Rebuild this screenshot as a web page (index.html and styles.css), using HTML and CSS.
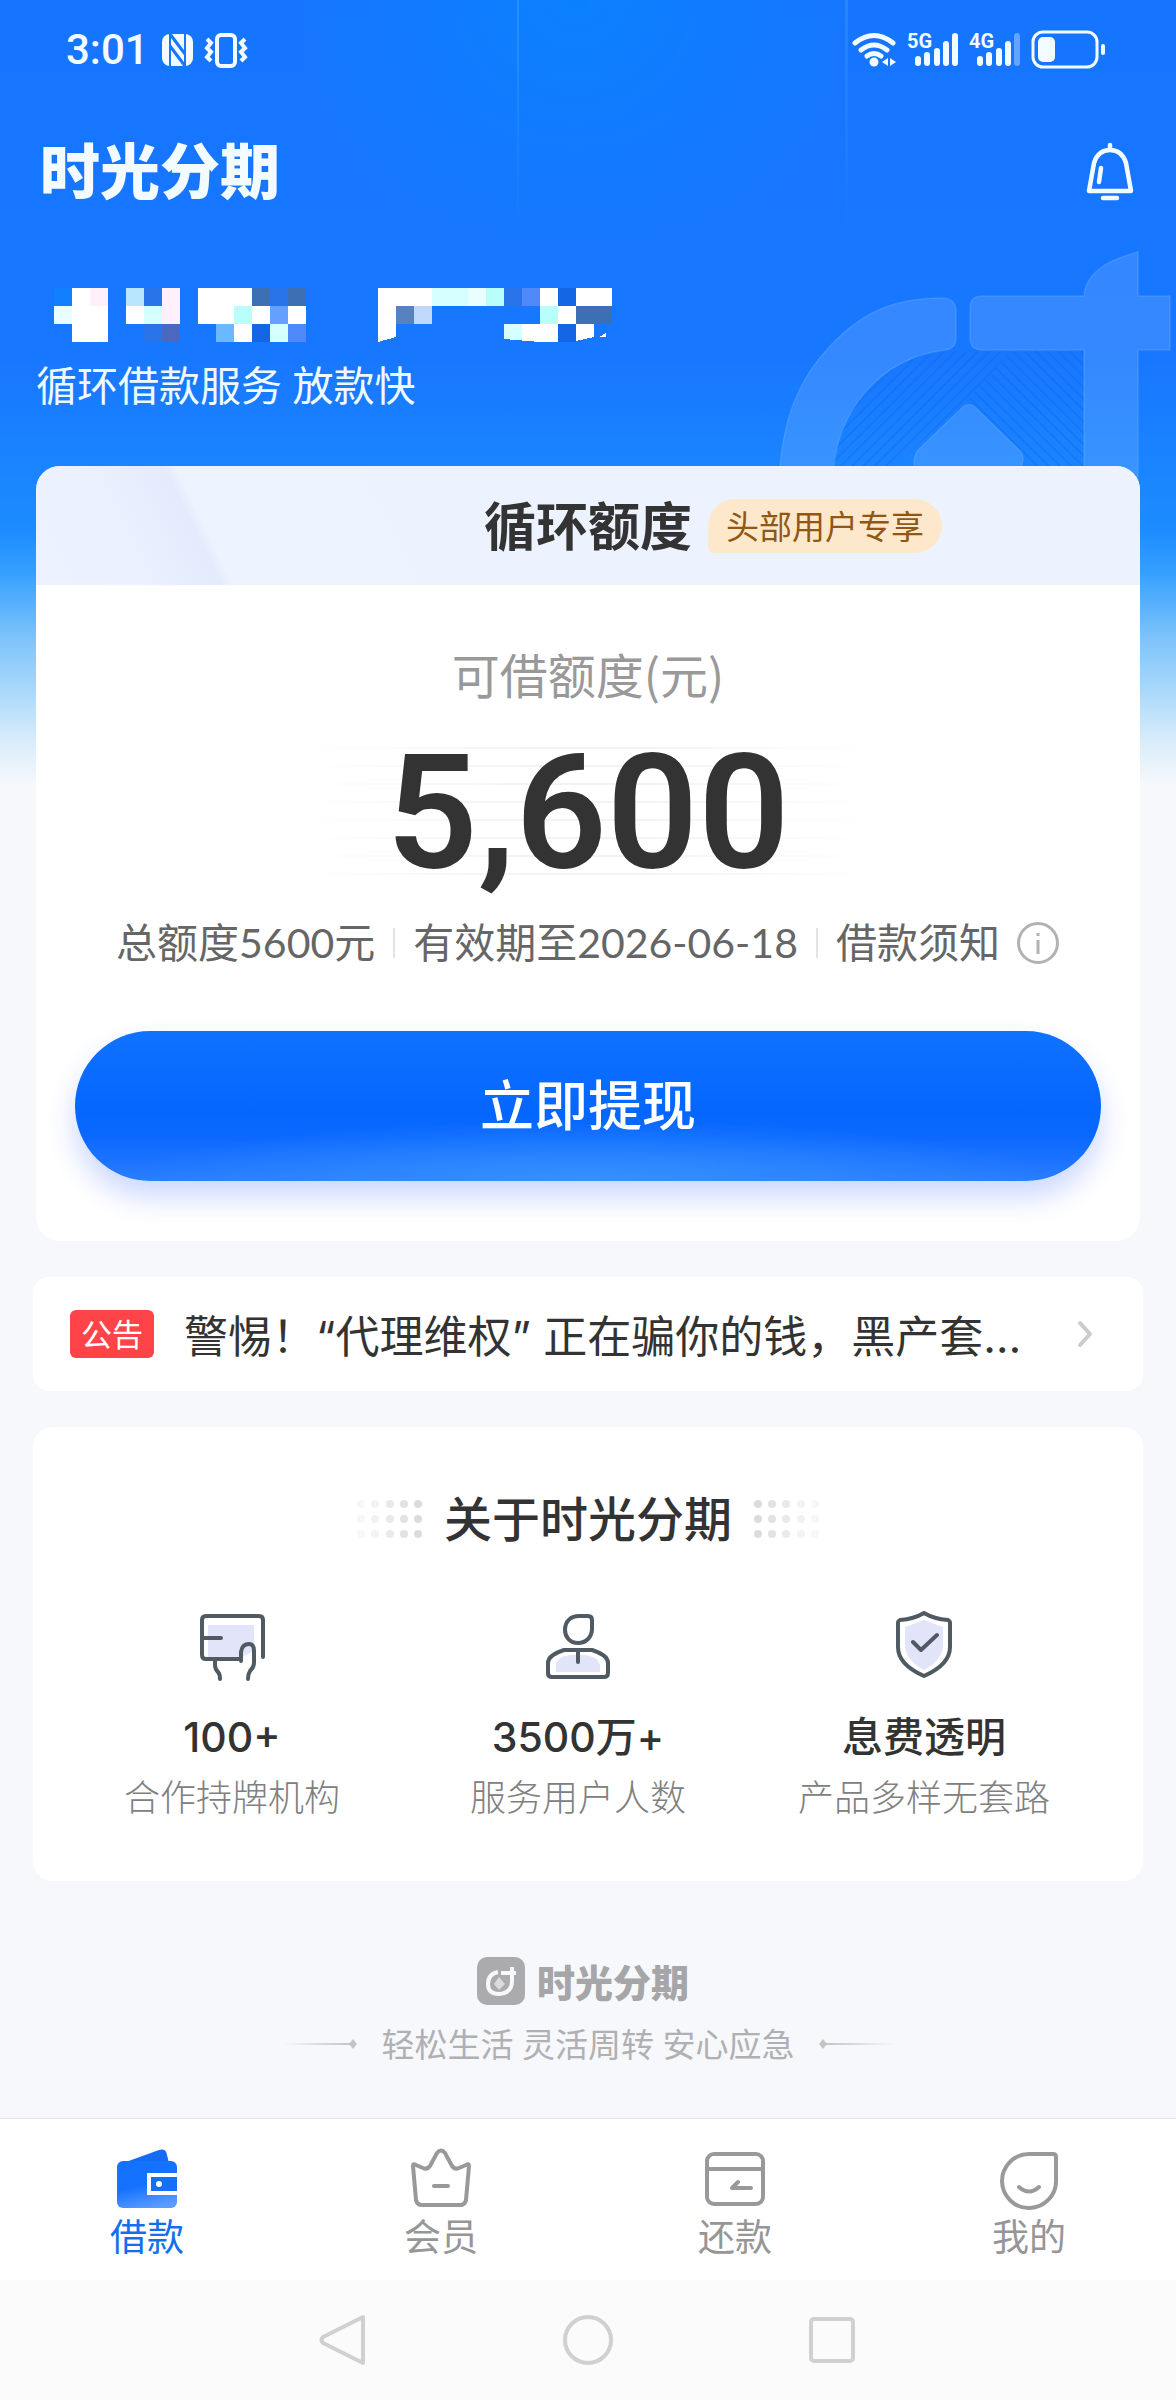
FILE: index.html
```html
<!DOCTYPE html>
<html lang="zh-CN">
<head>
<meta charset="utf-8">
<meta name="viewport" content="width=device-width, initial-scale=1">
<title>时光分期</title>
<link rel="stylesheet" href="styles.css">
</head>
<body>
<div class="page">
  <svg class="watermark" viewBox="776 240 400 300" aria-hidden="true">
    <defs>
      <pattern id="hatch-a" width="8" height="8" patternUnits="userSpaceOnUse" patternTransform="rotate(-45)"><path d="M0 4H8" stroke="#0b66e6" stroke-opacity=".3" stroke-width="2"/></pattern>
      <pattern id="hatch-b" width="8" height="8" patternUnits="userSpaceOnUse" patternTransform="rotate(45)"><path d="M0 4H8" stroke="#0b66e6" stroke-opacity=".3" stroke-width="2"/></pattern>
    </defs>
    <path d="M833 470C836 410 880 358 945 351H1010L968 400L890 470Z" fill="url(#hatch-a)"/>
    <path d="M1010 351H1084V470H1030L968 400Z" fill="url(#hatch-b)"/>
    <g fill="#fff" fill-opacity=".13" stroke="#7fc0ff" stroke-opacity=".25" stroke-width="1.5">
      <path d="M779 480C782 420 798 380 830 346C866 308 900 298 942 298Q956 298 956 312V337Q956 349 945 350C880 358 834 412 833 480Z"/>
      <path d="M1084 296C1086 272 1108 260 1138 252V296H1170V350H1138V530H1084V350H982Q970 350 970 338V308Q970 296 982 296Z"/>
      <path d="M962 408Q969 401 976 408L1020 451Q1026 458 1020 470H915Q912 458 918 450Z"/>
    </g>
  </svg>

  <header class="hero">
    <div class="status">
      <span class="status-time">3:01</span>
      <svg class="status-left" width="88" height="36" viewBox="0 0 88 36" fill="none" aria-hidden="true">
        <rect x="1" y="2" width="31" height="32" rx="8" fill="#f2fbff"/>
        <path d="M9 1V35M24 1V35" stroke="#1877ff" stroke-width="2"/>
        <path d="M9 2L24 22M9 14L24 34" stroke="#1877ff" stroke-width="3"/>
        <rect x="56" y="3" width="18" height="31" rx="4" stroke="#f2fbff" stroke-width="4"/>
        <path d="M46 7l4 4-4 5 4 4-4 5 4 4M84 7l-4 4 4 5-4 4 4 5-4 4" stroke="#f2fbff" stroke-width="4"/>
      </svg>
      <svg class="status-right" width="256" height="40" viewBox="850 30 256 40" fill="none" aria-hidden="true">
        <g stroke="#f2fbff" stroke-width="5" stroke-linecap="round">
          <path d="M855 43Q874 28 893 43M861 50Q874 40 887 50M867 56Q874 51 881 56"/>
        </g>
        <circle cx="874" cy="62" r="4.500" fill="#f2fbff"/>
        <path d="M888 58v8l-6-4zM890 58l6 4-6 4z" fill="#f2fbff"/>
        <g fill="#f2fbff">
          <text class="net" x="907" y="48">5G</text>
          <text class="net" x="969" y="48">4G</text>
          <rect x="915" y="56" width="6" height="10" rx="3"/><rect x="924" y="52" width="6" height="14" rx="3"/><rect x="934" y="48" width="6" height="18" rx="3"/><rect x="943" y="41" width="6" height="25" rx="3"/><rect x="952" y="33" width="6" height="33" rx="3"/>
          <rect x="977" y="56" width="6" height="10" rx="3"/><rect x="986" y="52" width="6" height="14" rx="3"/><rect x="996" y="48" width="6" height="18" rx="3"/><rect x="1005" y="41" width="6" height="25" rx="3"/><rect x="1014" y="33" width="6" height="33" rx="3" opacity=".35"/>
          <rect x="1038" y="37" width="17" height="25" rx="5"/><rect x="1101" y="44" width="4" height="11" rx="2"/>
        </g>
        <rect x="1033" y="32" width="64" height="35" rx="10" stroke="#f2fbff" stroke-width="3"/>
      </svg>
    </div>
    <div class="topbar">
      <h1 class="brand">时光分期</h1>
      <button class="bell" type="button" aria-label="消息">
        <svg width="52" height="60" viewBox="0 0 52 60" fill="none" stroke="#f2fbff" stroke-width="4.500" stroke-linecap="round" stroke-linejoin="round">
          <path d="M26 3V8M5 49L10 21Q14 8 26 8Q38 8 42 21L47 49ZM17 26L15 40M19 56H33"/>
        </svg>
      </button>
    </div>
    <svg class="masked" width="560" height="54" viewBox="0 0 560 54" shape-rendering="crispEdges" role="img" aria-label="已隐藏">
      <g fill="#fff">
        <path d="M18 0H54V54H18V18ZM0 18H18V36H0ZM72 18H126V36H72ZM144 0H198V36H144ZM198 18H216V36H198ZM234 18H252V36H234ZM180 36H198V54H180ZM324 0H378V18H342V49L324 54ZM486 0H504V18H486ZM504 18H522V36H504ZM522 0H558V18H522ZM450 36H486V54L450 51ZM522 36H540V49L522 53ZM545 49L552 45V49Z"/>
      </g>
      <path fill="#1080ff" d="M0 0H18V18H0Z"/>
      <path fill="#fff0fb" d="M36 0H54V18H36ZM108 0H126V36H108Z"/>
      <path fill="#b8e6ff" d="M72 0H90V18H72Z"/>
      <path fill="#2a74ea" d="M90 0H108V18H90ZM216 0H234V18H216ZM450 0H468V18H450ZM90 36H108V54H90Z"/>
      <path fill="#3d6fb5" d="M198 0H216V18H198ZM234 0H252V18H234ZM522 18H558V36H522Z"/>
      <path fill="#d6ffff" d="M378 0H414V18H378ZM90 18H108V36H90ZM216 36H234V54H216ZM450 36H468V52L450 51Z"/>
      <path fill="#e9ffff" d="M0 18H18V36H0ZM414 0H432V18H414Z"/>
      <path fill="#b8fffc" d="M432 0H450V18H432ZM180 18H198V36H180ZM486 18H504V36H486Z"/>
      <path fill="#fff" d="M486 36H504V54L486 54Z"/>
      <path fill="#4f88f8" d="M468 0H486V18H468ZM234 36H252V54H234Z"/>
      <path fill="#66a0ff" d="M216 18H234V36H216Z"/>
      <path fill="#6ab8ff" d="M162 36H180V54H162Z"/>
      <path fill="#5682c0" d="M342 18H360V36H342Z"/>
      <path fill="#c0d8fc" d="M360 18H378V36H360Z"/>
      <path fill="#4a68c0" d="M108 36H126V54H108Z"/>
      <path fill="#1466e4" d="M504 0H522V18H504ZM504 36H522V54H504ZM198 36H216V54H198Z"/>
    </svg>
    <p class="slogan">循环借款服务 放款快</p>
  </header>

  <main>
    <section class="quota">
      <div class="quota-head">
        <h2 class="quota-title">循环额度</h2>
        <span class="quota-badge">头部用户专享</span>
      </div>
      <div class="quota-body">
        <p class="quota-label">可借额度(元)</p>
        <p class="quota-amount">5,600</p>
        <div class="quota-info">
          <span>总额度5600元</span>
          <i class="sep"></i>
          <span>有效期至2026-06-18</span>
          <i class="sep"></i>
          <a class="terms" href="#terms">借款须知
            <svg width="44" height="44" viewBox="0 0 44 44" fill="none" stroke="#b2b2b2" stroke-width="3" aria-hidden="true"><circle cx="22" cy="22" r="19.500"/><path d="M22 19V33M22 12V15"/></svg>
          </a>
        </div>
        <button class="withdraw" type="button">立即提现</button>
      </div>
    </section>

    <a class="notice" href="#notice">
      <span class="notice-tag">公告</span>
      <span class="notice-text">警惕！“代理维权” 正在骗你的钱，黑产套…</span>
      <svg width="16" height="28" viewBox="0 0 16 28" fill="none" stroke="#ccc" stroke-width="4" stroke-linecap="round" stroke-linejoin="round" aria-hidden="true"><path d="M3 3L13 14L3 25"/></svg>
    </a>

    <section class="about">
      <div class="about-head">
        <svg class="dots" width="68" height="40" viewBox="0 0 68 40" fill="#dcdcdc" aria-hidden="true">
          <g id="dot-cols"><g opacity=".2"><circle cx="5" cy="5" r="4"/><circle cx="5" cy="20" r="4"/><circle cx="5" cy="35" r="4"/></g><g opacity=".35"><circle cx="19" cy="5" r="4"/><circle cx="19" cy="20" r="4"/><circle cx="19" cy="35" r="4"/></g><g opacity=".6"><circle cx="34" cy="5" r="4"/><circle cx="34" cy="20" r="4"/><circle cx="34" cy="35" r="4"/></g><g opacity=".8"><circle cx="48" cy="5" r="4"/><circle cx="48" cy="20" r="4"/><circle cx="48" cy="35" r="4"/></g><g><circle cx="62" cy="5" r="4"/><circle cx="62" cy="20" r="4"/><circle cx="62" cy="35" r="4"/></g></g>
        </svg>
        <h2 class="about-title">关于时光分期</h2>
        <svg class="dots" width="68" height="40" viewBox="0 0 68 40" fill="#dcdcdc" aria-hidden="true"><use href="#dot-cols" transform="matrix(-1 0 0 1 68 0)"/></svg>
      </div>
      <ul class="facts">
        <li class="fact">
          <svg width="72" height="72" viewBox="0 0 72 72" fill="none" stroke="#505a62" stroke-width="4" stroke-linecap="round" stroke-linejoin="round" aria-hidden="true">
            <path d="M12 14H58V40L46 46H12Z" fill="#e2e5fa" stroke="none"/>
            <path d="M45 48H10Q6 48 6 44V9Q6 5 10 5H63Q67 5 67 9V46M7 27H25M45 50V41Q46 33 53 33Q58 33 58 40V52Q58 56 54 60Q52 63 52 68M19 48V54Q19 58 22 61Q24 63 24 68"/>
          </svg>
          <strong class="fact-value">100+</strong>
          <span class="fact-note">合作持牌机构</span>
        </li>
        <li class="fact">
          <svg width="72" height="72" viewBox="0 0 72 72" fill="none" stroke="#505a62" stroke-width="4" stroke-linecap="round" stroke-linejoin="round" aria-hidden="true">
            <path d="M14 61V52Q16 46 28 44H44Q56 46 58 54V61Z" fill="#e2e5fa" stroke="none"/>
            <path d="M37 5H46Q50 5 50 9V18C50 26 44 32 36 32C28 32 23 26 23 19C23 10 29 5 37 5ZM22 39H50Q66 44 66 52V62Q66 66 62 66H10Q6 66 6 62V52Q6 44 22 39ZM36 40V51"/>
          </svg>
          <strong class="fact-value">3500万+</strong>
          <span class="fact-note">服务用户人数</span>
        </li>
        <li class="fact">
          <svg width="72" height="72" viewBox="0 0 72 72" fill="none" stroke="#505a62" stroke-width="4" stroke-linecap="round" stroke-linejoin="round" aria-hidden="true">
            <path d="M36 9L55 16V36Q53 50 36 59Q19 50 17 36V16Z" fill="#e2e5fa" stroke="none"/>
            <path d="M36 2Q46 8 60 9Q62 10 62 12V36C62 49 52 58 36 65C20 58 10 49 10 36V12Q10 10 12 9Q26 8 36 2ZM25 31L33 39L49 24"/>
          </svg>
          <strong class="fact-value">息费透明</strong>
          <span class="fact-note">产品多样无套路</span>
        </li>
      </ul>
    </section>
  </main>

  <footer class="footer">
    <div class="footer-brand">
      <svg width="48" height="48" viewBox="0 0 48 48" fill="none" aria-hidden="true">
        <rect width="48" height="48" rx="10" fill="#ababad"/>
        <path d="M21 15Q11 17 11 27Q11 37 22 37Q35 36 35 24V10M24 16H39" stroke="#f6f8fb" stroke-width="4"/>
        <path d="M22 20L28 27L22 33L17 27Z" fill="#dcdcde"/>
      </svg>
      <span>时光分期</span>
    </div>
    <div class="footer-line">
      <svg width="76" height="10" viewBox="0 0 76 10" aria-hidden="true"><defs><linearGradient id="fade"><stop stop-color="#c4c4c4" stop-opacity="0"/><stop offset="1" stop-color="#c4c4c4"/></linearGradient></defs><rect y="4" width="68" height="2" fill="url(#fade)"/><path d="M71 0L75 5L71 10L67 5Z" fill="#c4c4c4"/></svg>
      <span>轻松生活 灵活周转 安心应急</span>
      <svg width="76" height="10" viewBox="0 0 76 10" aria-hidden="true"><g transform="matrix(-1 0 0 1 76 0)"><rect y="4" width="68" height="2" fill="url(#fade)"/><path d="M71 0L75 5L71 10L67 5Z" fill="#c4c4c4"/></g></svg>
    </div>
  </footer>

  <nav class="tabs">
    <a class="tab tab-active" href="#loan">
      <svg width="64" height="64" viewBox="0 0 64 64" aria-hidden="true">
        <defs><linearGradient id="wallet" x1=".3" y1="0" x2=".6" y2="1"><stop offset=".5" stop-color="#1472ff"/><stop offset="1" stop-color="#5b9cff"/></linearGradient></defs>
        <path d="M8 16L44 3Q51 1 52 8L54 16Z" fill="#146cf4"/>
        <rect x="2" y="14" width="60" height="47" rx="6" fill="url(#wallet)"/>
        <path d="M62 28H34V46H62" fill="#1470fb" stroke="#fff" stroke-width="4"/>
        <circle cx="44" cy="37" r="3" fill="#fff"/>
      </svg>
      <span>借款</span>
    </a>
    <a class="tab" href="#member">
      <svg width="64" height="64" viewBox="0 0 64 64" fill="none" stroke="#999" stroke-width="4" stroke-linecap="round" stroke-linejoin="round" aria-hidden="true"><path d="M4 19Q4 16 7 18L14 21Q18 23 21 19L28 6Q32 1 36 6L43 19Q46 23 50 21L57 18Q60 16 60 19L57 53Q56 58 51 58H13Q8 58 7 53ZM25 39H39"/></svg>
      <span>会员</span>
    </a>
    <a class="tab" href="#repay">
      <svg width="64" height="64" viewBox="0 0 64 64" fill="none" stroke="#999" stroke-width="4" stroke-linecap="round" stroke-linejoin="round" aria-hidden="true"><rect x="4" y="7" width="56" height="50" rx="7"/><path d="M4 22H60M48 41H29L35 35"/></svg>
      <span>还款</span>
    </a>
    <a class="tab" href="#mine">
      <svg width="64" height="64" viewBox="0 0 64 64" fill="none" stroke="#999" stroke-width="4" stroke-linecap="round" stroke-linejoin="round" aria-hidden="true"><path d="M32 7H56Q59 7 59 10V33A27 27 0 1 1 32 7ZM22 40Q32 49 42 40"/></svg>
      <span>我的</span>
    </a>
  </nav>

  <div class="sysnav">
    <button type="button" aria-label="返回"><svg width="52" height="52" viewBox="0 0 52 52"><path d="M45 3V49L5 29Q2 26 5 23Z"/></svg></button>
    <button type="button" aria-label="主页"><svg width="52" height="52" viewBox="0 0 52 52"><circle cx="26" cy="26" r="23"/></svg></button>
    <button type="button" aria-label="最近任务"><svg width="52" height="52" viewBox="0 0 52 52"><rect x="5" y="5" width="42" height="42" rx="3"/></svg></button>
  </div>
</div>
</body>
</html>
```
FILE: styles.css
```css
* {
  box-sizing: border-box;
}

body,
h1,
h2,
p,
ul {
  margin: 0;
  padding: 0;
}

body {
  font-family: Lato, "Noto Sans CJK SC", sans-serif;
  color: #333;
  background: #f6f8fb;
}

a {
  color: inherit;
  text-decoration: none;
}

button {
  font: inherit;
  border: 0;
  padding: 0;
  background: none;
}

svg {
  display: block;
  flex: none;
}

.page {
  position: relative;
  display: flex;
  flex-direction: column;
  min-height: 100vh;
  background:
    linear-gradient(rgba(80, 170, 255, .4), transparent) 44% 0 / 2px 230px no-repeat,
    linear-gradient(rgba(80, 170, 255, .3), transparent) 72% 0 / 3px 230px no-repeat,
    radial-gradient(ellipse 24% 260px at 49% 0, rgba(0, 140, 255, .5), transparent) no-repeat,
    linear-gradient(#1675ff 0, #1877ff 360px, #1a82ff 450px, #1c8cff 530px, #36a0ff 573px, #80c4fb 640px, #a8d8fb 690px, #d8ecfb 740px, #f6f8fb 785px);
}

.watermark {
  position: absolute;
  top: 240px;
  right: 0;
  width: 400px;
  height: 300px;
}

.hero,
main {
  position: relative;
}

.status {
  display: flex;
  align-items: center;
  height: 100px;
  padding: 0 70px 0 66px;
}

.status-time {
  font: 500 42px/48px Roboto, sans-serif;
  color: #f2fbff;
}

.status-left {
  margin-left: 12px;
}

.status-right {
  margin-left: auto;
}

.net {
  font: bold 20px Roboto, sans-serif;
}

.topbar {
  display: flex;
  align-items: center;
  justify-content: space-between;
  height: 144px;
  padding: 0 40px;
}

.brand {
  padding-bottom: 8px;
  font: 900 60px/72px "Noto Sans CJK SC", sans-serif;
  color: #f2fbff;
}

.masked {
  margin: 44px 0 0 54px;
}

.slogan {
  margin: 20px 36px 56px;
  font-size: 41px;
  line-height: 48px;
  color: #eefaff;
}

.quota {
  margin: 0 36px;
  border-radius: 24px;
  overflow: hidden;
  background: #fff;
}

.quota-head {
  display: grid;
  grid-template-columns: 1fr auto 1fr;
  align-items: center;
  gap: 16px;
  height: 119px;
  background: linear-gradient(64deg, #ecf2fe 0, #ebf1fe 8%, #e3ebfd 16%, #edf3ff 17%, #ecf3fe 40%, #edf3fe 100%);
}

.quota-title {
  grid-column: 2;
  font-size: 52px;
  line-height: 60px;
  font-weight: 700;
}

.quota-badge {
  justify-self: start;
  padding: 0 18px;
  border-radius: 27px 27px 27px 6px;
  background: #fde8cc;
  color: #915714;
  font-size: 33px;
  line-height: 54px;
}

.quota-body {
  display: flex;
  flex-direction: column;
  align-items: center;
  padding: 58px 39px 60px;
}

.quota-label {
  font-family: "Noto Sans CJK SC", sans-serif;
  font-size: 48px;
  line-height: 60px;
  color: #999;
}

.quota-amount {
  position: relative;
  margin-top: 40px;
  padding: 0 80px;
  font: 600 160px/140px Roboto, sans-serif;
  background:
    linear-gradient(90deg, #fff, transparent 40% 60%, #fff),
    repeating-linear-gradient(transparent 0 4px, #f3f3f3 4px 6px, transparent 6px 18px);
}

.quota-info {
  display: flex;
  align-items: center;
  gap: 18px;
  margin-top: 36px;
  font-size: 41px;
  line-height: 48px;
  color: #666;
  white-space: nowrap;
}

.sep {
  width: 2px;
  height: 30px;
  background: #e4e4e4;
}

.terms {
  display: flex;
  align-items: center;
  gap: 16px;
}

.withdraw {
  width: 100%;
  height: 150px;
  margin-top: 64px;
  border-radius: 75px;
  background:
    radial-gradient(ellipse 46% 40% at 50% 100%, #3490ff, transparent),
    linear-gradient(#0f72ff 0, #0566ff 55%, #0c69ff 72%, #2a7dff 100%);
  box-shadow: 0 16px 28px rgba(40, 90, 255, .24);
  color: #fff;
  font-size: 54px;
  line-height: 60px;
  font-weight: 500;
}

.notice {
  display: flex;
  align-items: center;
  height: 114px;
  margin: 36px 33px 0;
  padding: 0 50px 0 37px;
  border-radius: 16px;
  background: #fff;
}

.notice-tag {
  padding: 0 11px;
  border-radius: 6px;
  background: #ff4449;
  color: #fff;
  font-size: 31px;
  line-height: 48px;
}

.notice-text {
  flex: 1;
  min-width: 0;
  margin: 0 24px 0 30px;
  padding-top: 6px;
  overflow: hidden;
  font-family: Inter, "Noto Sans CJK SC", sans-serif;
  font-size: 44px;
  line-height: 60px;
  white-space: nowrap;
}

.about {
  margin: 36px 33px 0;
  padding: 62px 46px 62px 26px;
  border-radius: 20px;
  background: #fff;
}

.about-head {
  display: flex;
  align-items: center;
  justify-content: center;
  gap: 20px;
  padding-left: 20px;
}

.about-title {
  font-size: 48px;
  line-height: 60px;
  font-weight: 500;
}

.facts {
  display: grid;
  grid-template-columns: repeat(3, 1fr);
  margin-top: 62px;
  list-style: none;
}

.fact {
  display: flex;
  flex-direction: column;
  align-items: center;
  white-space: nowrap;
}

.fact-value {
  margin-top: 30px;
  font-family: Inter, "Noto Sans CJK SC", sans-serif;
  font-size: 41px;
  line-height: 48px;
  font-weight: 500;
}

.fact-note {
  margin-top: 14px;
  font-size: 36px;
  line-height: 44px;
  font-weight: 300;
  color: #808080;
}

.footer {
  margin-top: 76px;
  padding-bottom: 52px;
}

.footer-brand {
  display: flex;
  align-items: center;
  justify-content: center;
  gap: 12px;
  padding-right: 10px;
  font: 900 38px/48px "Noto Sans CJK SC", sans-serif;
  color: #a6a6a8;
}

.footer-line {
  display: flex;
  align-items: center;
  justify-content: center;
  gap: 24px;
  margin-top: 17px;
  font-size: 33px;
  line-height: 44px;
  color: #b0b0b2;
}

.tabs {
  display: grid;
  grid-template-columns: repeat(4, 1fr);
  margin-top: auto;
  padding: 28px 0 21px;
  border-top: 1px solid #e4e7ea;
  background: #fff;
}

.tab {
  display: flex;
  flex-direction: column;
  align-items: center;
  gap: 4px;
  font-size: 37px;
  line-height: 44px;
  color: #969696;
}

.tab-active {
  color: #146fec;
}

.sysnav {
  display: flex;
  align-items: center;
  justify-content: center;
  gap: 192px;
  height: 120px;
  background: #fbfbfc;
}

.sysnav svg {
  fill: none;
  stroke: #d0d0d0;
  stroke-width: 4;
  stroke-linejoin: round;
}
```
